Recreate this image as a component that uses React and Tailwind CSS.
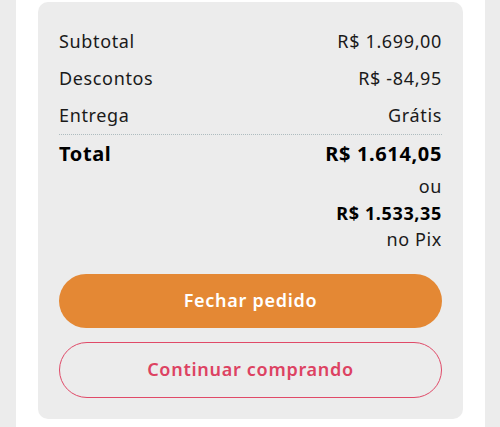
import React from "react";

const rows = [
  { label: "Subtotal", value: "R$ 1.699,00" },
  { label: "Descontos", value: "R$ -84,95" },
  { label: "Entrega", value: "Grátis" },
];

const CartSummary = () => {
  return (
    <div className="rounded-[10px] bg-[#ececec] px-[21px] pt-[21px] pb-[21px] text-[#1a1a1a] tracking-[0.04em]">
      {rows.map((row) => (
        <div key={row.label} className="flex h-[37px] items-center justify-between text-[18px]">
          <span>{row.label}</span>
          <span>{row.value}</span>
        </div>
      ))}

      {/* linha pontilhada antes do total */}
      <div className="border-t border-dotted border-[#aebcbf]" />

      <div className="flex h-[38px] items-center justify-between text-[20px] font-bold text-black">
        <span>Total</span>
        <span>R$ 1.614,05</span>
      </div>
      <div className="flex flex-col items-end text-[18px] leading-[26.5px]">
        <span>ou</span>
        <span className="font-bold text-black">R$ 1.533,35</span>
        <span>no Pix</span>
      </div>

      <button className="mt-[21px] flex h-[54px] w-full items-center justify-center rounded-full bg-[#e48834] text-[18px] font-semibold tracking-[0.04em] text-white">
        Fechar pedido
      </button>
      <button className="mt-[14px] flex h-[56px] w-full items-center justify-center rounded-full border border-[#e04a68] text-[18px] font-semibold tracking-[0.04em] text-[#dd4262]">
        Continuar comprando
      </button>
    </div>
  );
};

export default function App() {
  return (
    <div
      className="flex h-[427px] w-[500px] overflow-hidden bg-[#ececec]"
      style={{ fontFamily: '"Noto Sans", "Open Sans", sans-serif' }}
    >
      <div className="ml-[16px] w-[469px] bg-white px-[22px] pt-[2px]">
        <CartSummary />
      </div>
    </div>
  );
}
